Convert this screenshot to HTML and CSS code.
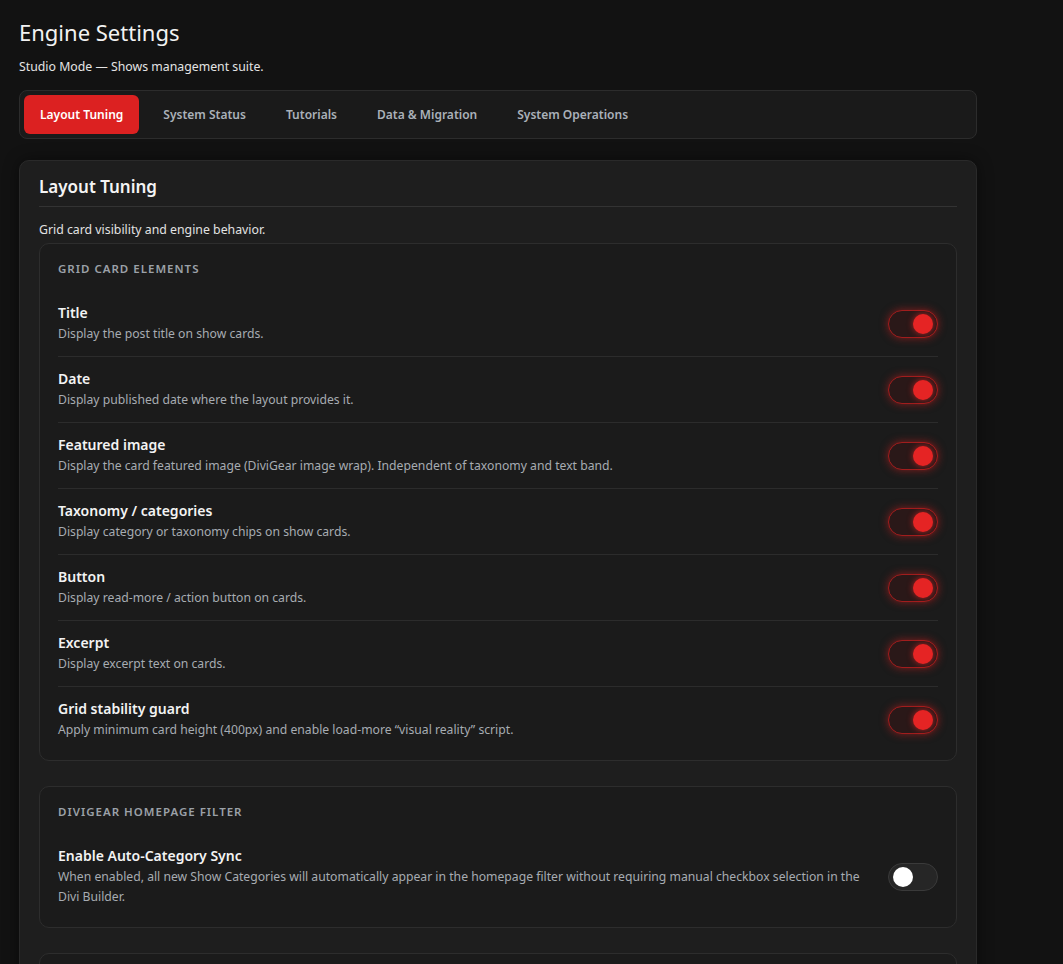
FILE: index.html
```html
<html lang="en">
<head>
  <meta charset="UTF-8">
  <title>Engine Settings</title>
  <link rel="stylesheet" href="styles.css">
</head>
<body>
  <div class="wrap">
    <h1>Engine Settings</h1>
    <p class="subtitle">Studio Mode — Shows management suite.</p>

    <nav class="tabs">
      <button class="tab active">Layout Tuning</button>
      <button class="tab">System Status</button>
      <button class="tab">Tutorials</button>
      <button class="tab">Data &amp; Migration</button>
      <button class="tab">System Operations</button>
    </nav>

    <div class="panel">
      <h2>Layout Tuning</h2>
      <p class="panel-desc">Grid card visibility and engine behavior.</p>

      <div class="section">
        <div class="section-title">Grid Card Elements</div>

        <div class="row">
          <div class="row-text">
            <div class="row-label">Title</div>
            <div class="row-desc">Display the post title on show cards.</div>
          </div>
          <span class="toggle on"><span class="knob"></span></span>
        </div>
        <div class="row">
          <div class="row-text">
            <div class="row-label">Date</div>
            <div class="row-desc">Display published date where the layout provides it.</div>
          </div>
          <span class="toggle on"><span class="knob"></span></span>
        </div>
        <div class="row">
          <div class="row-text">
            <div class="row-label">Featured image</div>
            <div class="row-desc">Display the card featured image (DiviGear image wrap). Independent of taxonomy and text band.</div>
          </div>
          <span class="toggle on"><span class="knob"></span></span>
        </div>
        <div class="row">
          <div class="row-text">
            <div class="row-label">Taxonomy / categories</div>
            <div class="row-desc">Display category or taxonomy chips on show cards.</div>
          </div>
          <span class="toggle on"><span class="knob"></span></span>
        </div>
        <div class="row">
          <div class="row-text">
            <div class="row-label">Button</div>
            <div class="row-desc">Display read-more / action button on cards.</div>
          </div>
          <span class="toggle on"><span class="knob"></span></span>
        </div>
        <div class="row">
          <div class="row-text">
            <div class="row-label">Excerpt</div>
            <div class="row-desc">Display excerpt text on cards.</div>
          </div>
          <span class="toggle on"><span class="knob"></span></span>
        </div>
        <div class="row">
          <div class="row-text">
            <div class="row-label">Grid stability guard</div>
            <div class="row-desc">Apply minimum card height (400px) and enable load-more “visual reality” script.</div>
          </div>
          <span class="toggle on"><span class="knob"></span></span>
        </div>
      </div>

      <div class="section">
        <div class="section-title">DiviGear Homepage Filter</div>
        <div class="row">
          <div class="row-text">
            <div class="row-label">Enable Auto-Category Sync</div>
            <div class="row-desc">When enabled, all new Show Categories will automatically appear in the homepage filter without requiring manual checkbox selection in the Divi Builder.</div>
          </div>
          <span class="toggle"><span class="knob"></span></span>
        </div>
      </div>

      <!-- next group starts below the fold -->
      <div class="section section-empty"></div>
    </div>
  </div>
</body>
</html>
```

FILE: styles.css
```css
body {
  margin: 0;
  background-color: #121212;
  color: #ececec;
  font-family: "Noto Sans", "Open Sans", sans-serif;
  overflow: hidden;
}

.wrap {
  width: 958px;
  padding: 17px 0 0 19px;
}

h1 {
  margin: 0;
  font-size: 22px;
  font-weight: 400;
  line-height: 30px;
  color: #f2f2f2;
}

.subtitle {
  margin: 11px 0 0;
  font-size: 12.3px;
  line-height: 18px;
  color: #e4e4e4;
}

/* tab bar */
.tabs {
  display: flex;
  gap: 8px;
  margin-top: 14px;
  padding: 4px;
  background-color: #1a1a1a;
  border: 1px solid #2c2c2c;
  border-radius: 8px;
}

.tab {
  height: 39px;
  padding: 0 16px;
  border: 0;
  border-radius: 6px;
  background: none;
  font-family: inherit;
  font-size: 12px;
  font-weight: 600;
  color: #aab1b9;
}

.tab.active {
  background-color: #dc2121;
  color: #fff;
}

/* main panel */
.panel {
  margin-top: 21px;
  padding: 14px 19px 20px;
  background-color: #1e1e1e;
  border: 1px solid #2a2a2a;
  border-radius: 10px;
  box-shadow: 0 0 16px rgba(0, 0, 0, 0.45);
}

h2 {
  margin: 0;
  padding-bottom: 7px;
  font-size: 17px;
  font-weight: 600;
  line-height: 24px;
  color: #f4f4f4;
  border-bottom: 1px solid #333;
}

.panel-desc {
  margin: 14px 0 4px;
  font-size: 12.3px;
  line-height: 18px;
  color: #e2e2e2;
}

.section {
  margin-bottom: 25px;
  padding: 17px 18px 8px;
  background-color: #1b1b1b;
  border: 1px solid #2d2d2d;
  border-radius: 10px;
}

.section-empty {
  height: 60px;
}

.section-title {
  font-size: 11.5px;
  font-weight: 600;
  line-height: 16px;
  letter-spacing: 1px;
  text-transform: uppercase;
  color: #9ba1a8;
  margin-bottom: 14px;
}

.row {
  display: flex;
  align-items: center;
  justify-content: space-between;
  gap: 24px;
  padding: 12px 0;
  border-top: 1px solid #2c2c2c;
}

.section-title + .row {
  border-top: 0;
}

.row-label {
  font-size: 14px;
  font-weight: 600;
  line-height: 20px;
  color: #f3f3f3;
}

.row-desc {
  margin-top: 1px;
  font-size: 12.2px;
  line-height: 20px;
  color: #a7acb2;
}

/* switches */
.toggle {
  flex: none;
  display: flex;
  align-items: center;
  width: 50px;
  height: 28px;
  padding: 0 4px;
  box-sizing: border-box;
  background-color: #262626;
  border: 1px solid #3a3a3a;
  border-radius: 14px;
}

.knob {
  width: 20px;
  height: 20px;
  border-radius: 50%;
  background-color: #fff;
}

.toggle.on {
  justify-content: flex-end;
  background-color: #2a1818;
  border-color: #a11d1d;
  box-shadow: 0 0 8px rgba(220, 33, 33, 0.55);
}

.toggle.on .knob {
  background-color: #e52424;
  box-shadow: 0 0 6px rgba(240, 40, 40, 0.7);
}
```
